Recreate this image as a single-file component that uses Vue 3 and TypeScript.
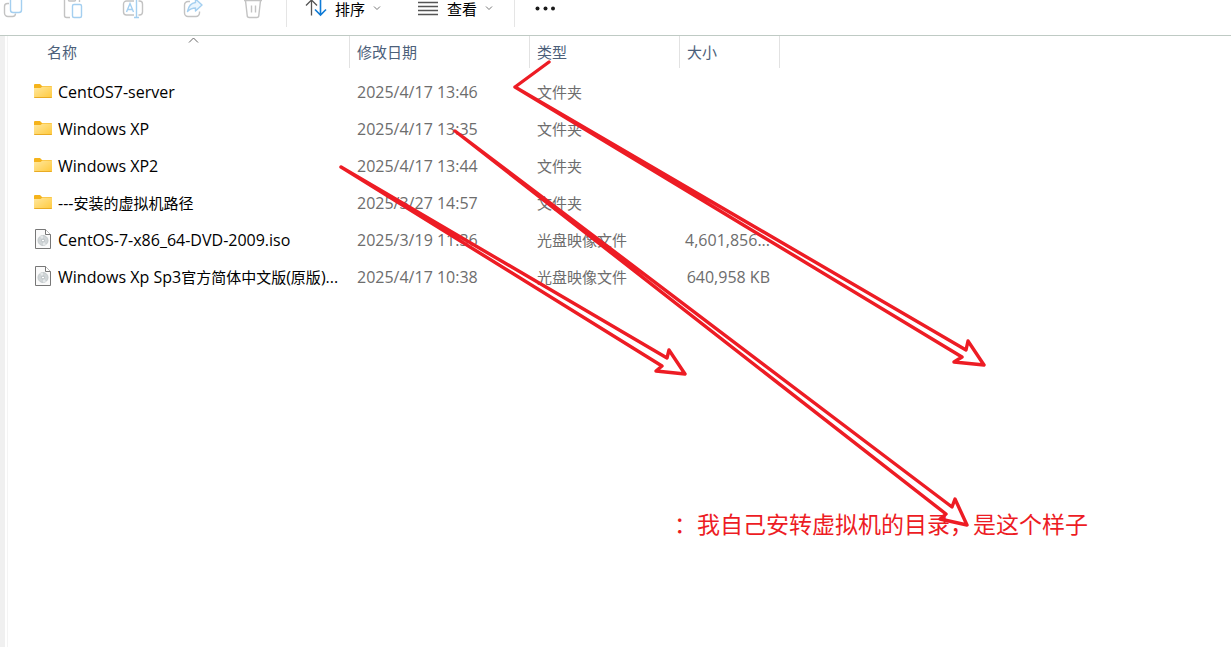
<script setup lang="ts">
type Kind = 'folder' | 'disc'
interface Part {
  text: string
  cjk?: boolean
}
interface Entry {
  kind: Kind
  name: Part[]
  date: string
  type: string
  size: string
}

const entries: Entry[] = [
  { kind: 'folder', name: [{ text: 'CentOS7-server' }], date: '2025/4/17 13:46', type: '文件夹', size: '' },
  { kind: 'folder', name: [{ text: 'Windows XP' }], date: '2025/4/17 13:35', type: '文件夹', size: '' },
  { kind: 'folder', name: [{ text: 'Windows XP2' }], date: '2025/4/17 13:44', type: '文件夹', size: '' },
  {
    kind: 'folder',
    name: [{ text: '---' }, { text: '安装的虚拟机路径', cjk: true }],
    date: '2025/3/27 14:57',
    type: '文件夹',
    size: '',
  },
  {
    kind: 'disc',
    name: [{ text: 'CentOS-7-x86_64-DVD-2009.iso' }],
    date: '2025/3/19 11:36',
    type: '光盘映像文件',
    size: '4,601,856...',
  },
  {
    kind: 'disc',
    name: [
      { text: 'Windows Xp Sp3' },
      { text: '官方简体中文版', cjk: true },
      { text: '(' },
      { text: '原版', cjk: true },
      { text: ')...' },
    ],
    date: '2025/4/17 10:38',
    type: '光盘映像文件',
    size: '640,958 KB',
  },
]
</script>

<template>
  <div class="explorer">
    <header class="toolbar">
      <div class="actions">
        <button type="button" aria-label="复制" disabled>
          <svg width="24" height="20" viewBox="0 0 24 20">
            <path class="grey" d="M8 3.5H6.500a3 3 0 0 0-3 3V13a3.500 3.500 0 0 0 3.500 3.500h4.500a3 3 0 0 0 3-3" />
            <rect class="blue" x="9.500" y="-2.500" width="11" height="15" rx="2.500" />
          </svg>
        </button>
        <button type="button" aria-label="粘贴" disabled>
          <svg width="24" height="20" viewBox="0 0 24 20">
            <path class="grey" d="M9 17.500H5.500a2 2 0 0 1-2-2V-1M18.500-1v3M7.500-1v1a1 1 0 0 0 1 1h5a1 1 0 0 0 1-1v-1" />
            <rect class="blue" x="11.500" y="4.500" width="9" height="13" rx="1.500" />
          </svg>
        </button>
        <button type="button" aria-label="重命名" disabled>
          <svg width="24" height="20" viewBox="0 0 24 20">
            <path class="grey" d="M13 1H5.500a3 3 0 0 0-3 3v8a3 3 0 0 0 3 3H13M17.500 1h1a3 3 0 0 1 3 3v8a3 3 0 0 1-3 3h-1" />
            <path class="blue" d="M5.500 12 9 3.500 12.500 12M6.700 9.500h4.600M15.500 0v17.500M13 17.500h5" />
          </svg>
        </button>
        <button type="button" aria-label="共享" disabled>
          <svg width="24" height="20" viewBox="0 0 24 20">
            <path class="grey" d="M9 1.500H7a3.500 3.500 0 0 0-3.500 3.500v8A3.500 3.500 0 0 0 7 16.500h8a3.500 3.500 0 0 0 3.500-3.500v-1.500" />
            <path class="blue share" d="M14.500-1 21 5l-6.500 6V8C11 8 9 9 6.500 11.500 7.500 6 10 3 14.500 2.500z" />
          </svg>
        </button>
        <button type="button" aria-label="删除" disabled>
          <svg width="24" height="20" viewBox="0 0 24 20">
            <path class="grey" d="M3 .5h18M4.500.5 6.200 15.500a2 2 0 0 0 2 2h7.600a2 2 0 0 0 2-2L19.500.5M10.500 5.500v7M14.500 5.500v7" />
          </svg>
        </button>
      </div>
      <span class="divider"></span>
      <button type="button" class="menu">
        <svg width="22" height="18" viewBox="0 0 22 18">
          <path class="dark" d="M6.500 15.500V0M1 5.500 6.500 0 12 5.500" />
          <path class="accent" d="M15.500-1v16M10 9.500l5.500 5.500 5.500-5.500" />
        </svg>
        <span>排序</span>
        <svg class="chevron" width="8" height="16" viewBox="0 0 8 16"><path d="M1 6.500l3 3 3-3" /></svg>
      </button>
      <button type="button" class="menu view">
        <svg width="22" height="18" viewBox="0 0 22 18">
          <path class="dark" d="M1 2.500h20M1 6.500h20M1 10.500h20M1 14.500h20" />
        </svg>
        <span>查看</span>
        <svg class="chevron" width="8" height="16" viewBox="0 0 8 16"><path d="M1 6.500l3 3 3-3" /></svg>
      </button>
      <span class="divider"></span>
      <button type="button" class="more" aria-label="更多">
        <svg width="20" height="16" viewBox="0 0 20 16">
          <circle cx="2.500" cy="8.500" r="2" /><circle cx="10.500" cy="8.500" r="2" /><circle cx="18" cy="8.500" r="2" />
        </svg>
      </button>
    </header>

    <main class="content">
      <table>
        <thead>
          <tr>
            <th scope="col" class="c-name" aria-sort="ascending">
              名称
              <svg class="sorted" width="11" height="6" viewBox="0 0 11 6"><path d="M1 5.500l4.500-4.500L10 5.500" /></svg>
            </th>
            <th scope="col" class="c-date">修改日期</th>
            <th scope="col" class="c-type">类型</th>
            <th scope="col" class="c-size">大小</th>
          </tr>
        </thead>
        <tbody>
          <tr v-for="(entry, i) in entries" :key="i">
            <td>
              <div class="name">
                <svg v-if="entry.kind === 'folder'" width="20" height="22" viewBox="0 0 20 22">
                  <defs>
                    <linearGradient :id="`folder-${i}`" x1="0" y1="0" x2="1" y2="1">
                      <stop offset="0" stop-color="#ffe8a0" />
                      <stop offset="1" stop-color="#ffc93c" />
                    </linearGradient>
                  </defs>
                  <path fill="#f5b31b" d="M1 4a1 1 0 0 1 1-1h5l2 2h9a1 1 0 0 1 1 1v3H1z" />
                  <path :fill="`url(#folder-${i})`" d="M1 7h6.500l2-1.500H19V16a1 1 0 0 1-1 1H2a1 1 0 0 1-1-1z" />
                  <path fill="#e9ab24" d="M1 16h18a1 1 0 0 1-1 1H2a1 1 0 0 1-1-1z" />
                </svg>
                <svg v-else width="20" height="22" viewBox="0 0 20 22">
                  <path fill="#fafafa" stroke="#777" d="M2.500.5h10l5 5v14h-15z" />
                  <path fill="#fff" stroke="#777" d="M12.500.5v5h5" />
                  <circle cx="10" cy="11.500" r="5" fill="#d0d5d7" stroke="#c3c9cb" />
                  <path fill="#e4e8e9" d="M10 11.500 7 7.500A5 5 0 0 1 10 6.500zM10 11.500l3 4a5 5 0 0 1-3 1z" />
                  <circle cx="10" cy="11.500" r="1.500" fill="#fff" stroke="#b5bcbf" />
                </svg>
                <span class="label"><span v-for="(part, p) in entry.name" :key="p" :class="{ cjk: part.cjk }">{{ part.text }}</span></span>
              </div>
            </td>
            <td>{{ entry.date }}</td>
            <td class="cjk">{{ entry.type }}</td>
            <td class="size">{{ entry.size }}</td>
          </tr>
        </tbody>
      </table>
    </main>

    <p class="note">：我自己安转虚拟机的目录，是这个样子</p>
    <svg class="arrows" width="1231" height="647" viewBox="0 0 1231 647" aria-hidden="true">
      <path d="M341 167 667 358 669 350 685 374 656 371 662 366z" />
      <path d="M455 131 952 507 955 499 967 525 940 519 946 514z" />
      <path d="M549 62 515 87 966 350 968 341 984 365 954 362 962 357 515 87" />
    </svg>
  </div>
</template>

<style>
body {
  margin: 0;
  background: #fff;
}
</style>

<style scoped>
.explorer {
  position: relative;
  min-height: 100vh;
  display: flex;
  flex-direction: column;
  overflow: hidden;
  background: #fff;
  font-family: "Open Sans", "Noto Sans CJK SC", sans-serif;
  font-size: 16px;
  color: #000;
}
button {
  border: 0;
  padding: 0;
  background: none;
  font: inherit;
  color: inherit;
}
svg {
  display: block;
  flex: none;
  fill: none;
}
.toolbar {
  display: flex;
  align-items: flex-start;
  height: 35px;
  border-bottom: 1px solid #bfcac4;
}
.actions {
  display: flex;
  gap: 36px;
  padding: 0 21px 0 1px;
}
.grey {
  stroke: #c3c3c3;
  stroke-width: 1.4;
}
.blue {
  stroke: #a4cff0;
  stroke-width: 1.4;
  fill: #fff;
}
.share {
  fill: #eaf5fd;
  stroke-linejoin: round;
}
.dark {
  stroke: #555;
  stroke-width: 1.3;
}
.accent {
  stroke: #0f7bd6;
  stroke-width: 1.6;
}
.divider {
  width: 1px;
  height: 27px;
  background: #e5e5e5;
}
.menu {
  display: flex;
  gap: 8px;
  margin-left: 18px;
  font-family: "Noto Sans CJK SC", sans-serif;
  font-size: 15px;
  line-height: 17px;
}
.menu.view {
  margin-left: 36px;
  margin-right: 21px;
}
.chevron {
  stroke: #777;
}
.more {
  margin-left: 20px;
}
.more circle {
  fill: #1a1a1a;
}
.content {
  display: flex;
  flex: 1;
  align-items: flex-start;
  margin-left: 7px;
  padding-left: 19px;
  border-left: 1px solid #f4f4f4;
  box-shadow: -2px 0 #fff, -7px 0 #f0f0f0;
}
table {
  border-collapse: separate;
  border-spacing: 0;
}
.c-name {
  width: 323px;
}
.c-date {
  width: 180px;
}
.c-type {
  width: 150px;
}
.c-size {
  width: 100px;
}
th {
  box-sizing: border-box;
  position: relative;
  height: 32px;
  padding: 0 0 0 7px;
  border-right: 1px solid #e2e2e2;
  font-size: 15px;
  font-weight: 400;
  text-align: left;
  line-height: 32px;
  color: #4c607a;
}
th:first-child {
  padding-left: 20px;
}
.sorted {
  position: absolute;
  top: 1px;
  left: 50%;
  stroke: #666;
}
tbody::before {
  content: "";
  display: block;
  height: 5px;
}
td {
  height: 37px;
  padding: 0 0 0 7px;
  line-height: 24px;
  color: #6d6d6d;
  white-space: nowrap;
}
td:first-child {
  padding-left: 6px;
  color: #000;
}
.name {
  display: flex;
  align-items: center;
  gap: 5px;
}
.cjk {
  font-size: 15px;
}
td.size {
  padding: 0 10px 0 0;
  text-align: right;
}
.note {
  position: absolute;
  left: 674px;
  top: 507px;
  margin: 0;
  font-size: 23px;
  line-height: 34px;
  white-space: nowrap;
  color: #ed1c24;
}
.arrows {
  position: absolute;
  top: 0;
  left: 0;
  pointer-events: none;
  stroke: #ed1c24;
  stroke-width: 3.4;
  stroke-linejoin: round;
  stroke-linecap: round;
}
</style>
